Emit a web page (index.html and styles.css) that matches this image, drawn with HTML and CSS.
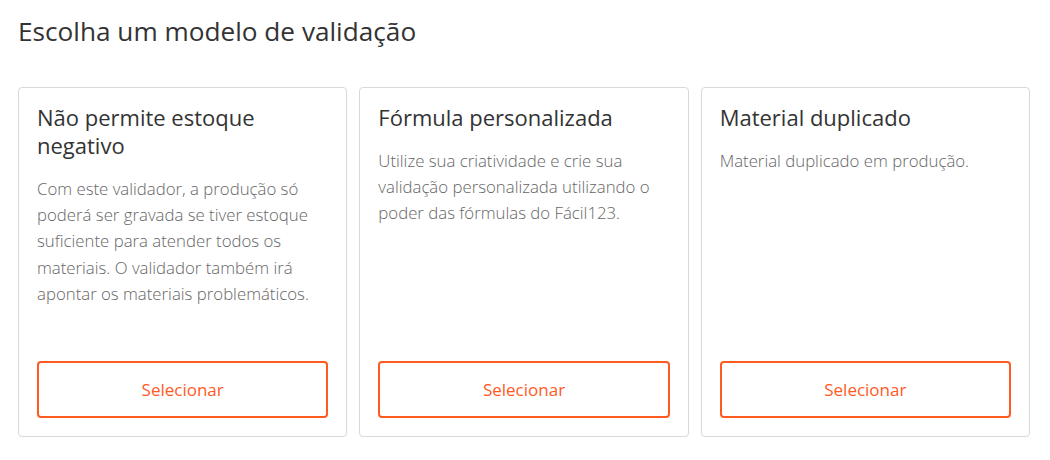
FILE: index.html
```html
<!DOCTYPE html>
<html lang="pt-BR">
<head>
<meta charset="utf-8">
<link rel="stylesheet" href="styles.css">
</head>
<body>
<main class="page">
  <h1 class="page-title">Escolha um modelo de validação</h1>
  <div class="cards">
    <section class="card">
      <h2 class="card-title">Não permite estoque negativo</h2>
      <p class="card-text">Com este validador, a produção só poderá ser gravada se tiver estoque suficiente para atender todos os materiais. O validador também irá apontar os materiais problemáticos.</p>
      <button class="btn-select" type="button">Selecionar</button>
    </section>
    <section class="card">
      <h2 class="card-title">Fórmula personalizada</h2>
      <p class="card-text">Utilize sua criatividade e crie sua validação personalizada utilizando o poder das fórmulas do Fácil123.</p>
      <button class="btn-select" type="button">Selecionar</button>
    </section>
    <section class="card">
      <h2 class="card-title">Material duplicado</h2>
      <p class="card-text">Material duplicado em produção.</p>
      <button class="btn-select" type="button">Selecionar</button>
    </section>
  </div>
</main>
</body>
</html>
```
FILE: styles.css
```css
* { box-sizing: border-box; }
html, body { margin: 0; padding: 0; background: #fff; }
body {
  font-family: "Open Sans", "Noto Sans", sans-serif;
  color: #333;
}
.page {
  padding: 13px 20px 0 18px;
}
.page-title {
  margin: 0 0 38px;
  font-size: 26.2px;
  font-weight: 400;
  line-height: 36px;
  color: #333;
}
.cards {
  display: grid;
  grid-template-columns: repeat(3, 1fr);
  gap: 12px;
}
.card {
  display: flex;
  flex-direction: column;
  border: 1px solid #d9d9d9;
  border-radius: 4px;
  padding: 15px 18px 18px;
  min-height: 350px;
}
.card-title {
  margin: 0 0 17px;
  font-size: 22px;
  font-weight: 400;
  line-height: 28px;
  color: #333;
}
.card-text {
  margin: 0;
  font-size: 16.8px;
  font-weight: 300;
  line-height: 26.2px;
  color: #666;
}
.btn-select {
  margin-top: auto;
  height: 57px;
  width: 100%;
  background: #fff;
  border: 2px solid #ff5a1f;
  border-radius: 4px;
  color: #ff5a1f;
  font-family: inherit;
  font-size: 17px;
  font-weight: 400;
  cursor: pointer;
}
```
